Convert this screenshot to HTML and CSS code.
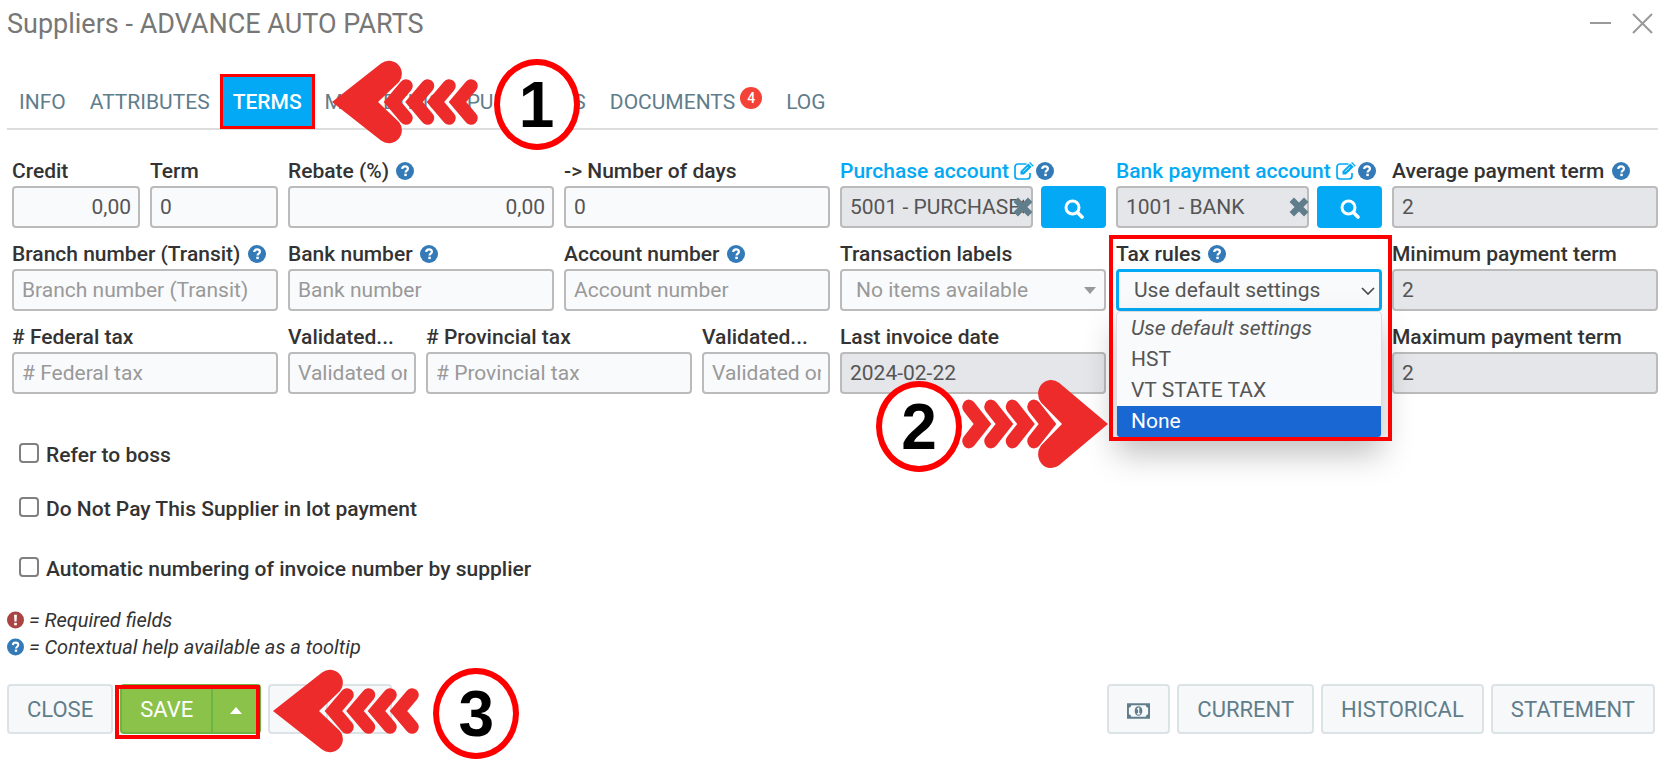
FILE: index.html
```
<!DOCTYPE html>
<html lang="en">
<head>
  <meta charset="UTF-8" />
  <meta name="viewport" content="width=device-width, initial-scale=1.0"/>
  <title>Suppliers - ADVANCE AUTO PARTS</title>
  <link rel="stylesheet" href="styles.css">
</head>
<body>
  <!-- shared icons -->
  <svg class="sprite" aria-hidden="true">
    <symbol id="help" viewBox="0 0 18 18">
      <circle cx="9" cy="9" r="9" fill="#337ab7"/>
      <path d="M6.2 7c.1-1.700 1.200-2.600 2.900-2.600s2.800 1 2.800 2.400c0 1.900-2.300 1.900-2.300 3.700" fill="none" stroke="#fff" stroke-width="2.200"/>
      <rect x="8.300" y="11.700" width="2.500" height="2.400" fill="#fff"/>
    </symbol>
    <symbol id="required" viewBox="0 0 18 18">
      <circle cx="9" cy="9" r="9" fill="#a94442"/>
      <path d="M7.500 3.500h3l-.4 7.200H7.900z" fill="#fff"/>
      <rect x="7.600" y="12" width="2.800" height="2.600" fill="#fff"/>
    </symbol>
    <symbol id="edit" viewBox="0 0 20 18">
      <path d="M12.500 2H4a3 3 0 0 0-3 3v9a3 3 0 0 0 3 3h9a3 3 0 0 0 3-3v-3" fill="none" stroke="currentColor" stroke-width="1.700"/>
      <path d="M6.500 9.200 14.300 1.400l3.400 3.400L9.900 12.600H6.500z" fill="currentColor"/>
      <path d="m15.100.7 1-.6 3.600 3.600-.9 1z" fill="currentColor"/>
      <path d="m9 9.800 5-5" stroke="#fff" stroke-width=".8"/>
    </symbol>
    <symbol id="search" viewBox="0 0 20 20">
      <circle cx="8.500" cy="8.500" r="6.500" fill="none" stroke="currentColor" stroke-width="3"/>
      <path d="m13.500 13.500 4.500 4.500" stroke="currentColor" stroke-width="3.600" stroke-linecap="round"/>
    </symbol>
    <symbol id="clear" viewBox="0 0 18 18">
      <path d="m2.500 2.500 13 13M15.500 2.500l-13 13" stroke="currentColor" stroke-width="5.600"/>
    </symbol>
    <symbol id="arrow" viewBox="0 0 146 84" preserveAspectRatio="none">
      <path d="M0 42 49 3.500A13 13 0 0 1 67 22L46 42l21 20a13 13 0 0 1-18 18.500z" fill="#ee2b2b"/>
      <path d="M74 26 60.500 42 74 58M95.500 26 82 42l13.500 16M117 26l-13.500 16L117 58M139 26l-13.500 16L139 58" fill="none" stroke="#ee2b2b" stroke-width="13.500" stroke-linecap="round"/>
    </symbol>
  </svg>

  <div class="window">
    <header class="titlebar">
      <h1>Suppliers - ADVANCE AUTO PARTS</h1>
      <div class="window-actions">
        <button type="button" aria-label="Minimize"><svg width="22" height="22"><path d="M0 10h21" stroke="#999" stroke-width="2"/></svg></button>
        <button type="button" aria-label="Close window"><svg width="22" height="22"><path d="m1 1 19 19M20 1 1 20" stroke="#999" stroke-width="2"/></svg></button>
      </div>
    </header>

    <nav class="tabs">
      <a href="#info">INFO</a>
      <a href="#attributes">ATTRIBUTES</a>
      <div class="step step-tab">
        <a href="#terms" class="active">TERMS</a>
        <div class="callout">
          <svg class="arrow"><use href="#arrow"/></svg>
          <span class="number">1</span>
        </div>
      </div>
      <a href="#marketing">MARKETING</a>
      <a href="#purchases">PURCHASES</a>
      <a href="#documents">DOCUMENTS<span class="badge">4</span></a>
      <a href="#log">LOG</a>
    </nav>

    <form id="termsForm">
      <div class="fields">
        <div class="field small">
          <label for="credit">Credit</label>
          <input type="text" id="credit" class="amount" value="0,00" />
        </div>
        <div class="field small">
          <label for="term">Term</label>
          <input type="text" id="term" value="0" />
        </div>
        <div class="field">
          <label for="rebate">Rebate (%) <svg class="icon"><use href="#help"/></svg></label>
          <input type="text" id="rebate" class="amount" value="0,00" />
        </div>
        <div class="field">
          <label for="days">-&gt; Number of days</label>
          <input type="text" id="days" value="0" />
        </div>
        <div class="field">
          <label for="purchaseAccount" class="linked"><a href="#purchase-account">Purchase account <svg class="icon edit"><use href="#edit"/></svg></a><svg class="icon"><use href="#help"/></svg></label>
          <div class="lookup">
            <div class="lookup-value">
              <input type="text" id="purchaseAccount" value="5001 - PURCHASES" readonly />
              <button type="button" class="clear" aria-label="Clear"><svg><use href="#clear"/></svg></button>
            </div>
            <button type="button" class="search" aria-label="Search"><svg><use href="#search"/></svg></button>
          </div>
        </div>
        <div class="field">
          <label for="bankAccount" class="linked"><a href="#bank-account">Bank payment account <svg class="icon edit"><use href="#edit"/></svg></a><svg class="icon"><use href="#help"/></svg></label>
          <div class="lookup">
            <div class="lookup-value">
              <input type="text" id="bankAccount" value="1001 - BANK" readonly />
              <button type="button" class="clear" aria-label="Clear"><svg><use href="#clear"/></svg></button>
            </div>
            <button type="button" class="search" aria-label="Search"><svg><use href="#search"/></svg></button>
          </div>
        </div>
        <div class="field">
          <label for="averageTerm">Average payment term <svg class="icon"><use href="#help"/></svg></label>
          <input type="text" id="averageTerm" value="2" readonly />
        </div>

        <div class="field">
          <label for="branch">Branch number (Transit) <svg class="icon"><use href="#help"/></svg></label>
          <input type="text" id="branch" placeholder="Branch number (Transit)" />
        </div>
        <div class="field">
          <label for="bankNumber">Bank number <svg class="icon"><use href="#help"/></svg></label>
          <input type="text" id="bankNumber" placeholder="Bank number" />
        </div>
        <div class="field">
          <label for="accountNumber">Account number <svg class="icon"><use href="#help"/></svg></label>
          <input type="text" id="accountNumber" placeholder="Account number" />
        </div>
        <div class="field">
          <label for="labels">Transaction labels</label>
          <div class="select-wrap">
            <select id="labels" class="empty"><option>No items available</option></select>
            <svg class="caret" viewBox="0 0 12 7"><path d="M0 0h12L6 7z" fill="#999"/></svg>
          </div>
        </div>
        <div class="field step step-tax">
          <label for="taxRules">Tax rules <svg class="icon"><use href="#help"/></svg></label>
          <div class="select-wrap">
            <select id="taxRules" class="open"><option>Use default settings</option></select>
            <svg class="chevron" viewBox="0 0 14 8"><path d="m1 1 6 6 6-6" fill="none" stroke="#444" stroke-width="1.600"/></svg>
            <ul class="menu">
              <li class="default">Use default settings</li>
              <li>HST</li>
              <li>VT STATE TAX</li>
              <li class="selected">None</li>
            </ul>
          </div>
          <div class="callout">
            <span class="number">2</span>
            <svg class="arrow"><use href="#arrow"/></svg>
          </div>
        </div>
        <div class="field">
          <label for="minimumTerm">Minimum payment term</label>
          <input type="text" id="minimumTerm" value="2" readonly />
        </div>

        <div class="field">
          <label for="federalTax"># Federal tax</label>
          <input type="text" id="federalTax" placeholder="# Federal tax" />
        </div>
        <div class="field small">
          <label for="federalValidated">Validated...</label>
          <input type="text" id="federalValidated" placeholder="Validated on" />
        </div>
        <div class="field">
          <label for="provincialTax"># Provincial tax</label>
          <input type="text" id="provincialTax" placeholder="# Provincial tax" />
        </div>
        <div class="field small">
          <label for="provincialValidated">Validated...</label>
          <input type="text" id="provincialValidated" placeholder="Validated on" />
        </div>
        <div class="field">
          <label for="lastInvoice">Last invoice date</label>
          <input type="text" id="lastInvoice" value="2024-02-22" readonly />
        </div>
        <div class="field last">
          <label for="maximumTerm">Maximum payment term</label>
          <input type="text" id="maximumTerm" value="2" readonly />
        </div>
      </div>

      <div class="checks">
        <label><input type="checkbox" /><span>Refer to boss</span></label>
        <label><input type="checkbox" /><span>Do Not Pay This Supplier in lot payment</span></label>
        <label><input type="checkbox" /><span>Automatic numbering of invoice number by supplier</span></label>
      </div>

      <div class="legend">
        <p><svg class="icon"><use href="#required"/></svg> = Required fields</p>
        <p><svg class="icon"><use href="#help"/></svg> = Contextual help available as a tooltip</p>
      </div>

      <footer class="actions">
        <button type="button" class="btn">CLOSE</button>
        <div class="step step-save">
          <div class="split save">
            <button type="submit" class="btn">SAVE</button>
            <button type="button" class="btn toggle" aria-label="More save options"><svg viewBox="0 0 12 7"><path d="M0 7h12L6 0z" fill="currentColor"/></svg></button>
          </div>
          <div class="callout">
            <svg class="arrow"><use href="#arrow"/></svg>
            <span class="number">3</span>
          </div>
        </div>
        <div class="split print">
          <button type="button" class="btn" aria-label="Print"></button>
          <button type="button" class="btn toggle" aria-label="More print options"><svg viewBox="0 0 12 7"><path d="M0 7h12L6 0z" fill="currentColor"/></svg></button>
        </div>
        <div class="reports">
          <button type="button" class="btn money" aria-label="Payments">
            <svg viewBox="0 0 24 16"><path fill-rule="evenodd" d="M0 0h24v16H0zM4.500 2A3 3 0 0 1 2 4.500v7A3 3 0 0 1 4.500 14h15a3 3 0 0 1 2.500-2.500v-7A3 3 0 0 1 19.500 2z" fill="currentColor"/><ellipse cx="12" cy="8" rx="4" ry="5" fill="currentColor"/><path d="m10.500 6.200 1.700-1.200v5.600M10.300 11h3.600" fill="none" stroke="#fff" stroke-width="1.200"/></svg>
          </button>
          <button type="button" class="btn">CURRENT</button>
          <button type="button" class="btn">HISTORICAL</button>
          <button type="button" class="btn">STATEMENT</button>
        </div>
      </footer>
    </form>
  </div>
</body>
</html>
```

FILE: styles.css
```
:root {
  --text: #333;
  --value: #555;
  --muted: #999;
  --slate: #607d8b;
  --primary: #03a9f4;
  --border: #bbb;
  --field-bg: #f9fafc;
  --readonly-bg: #e5e6ea;
  --mark: #f00;
}

* {
  box-sizing: border-box;
}

body {
  margin: 0;
  font-family: Roboto, sans-serif;
  font-size: 20px;
  color: var(--text);
  background: #fff;
}

button, input, select {
  font: inherit;
}

button {
  cursor: pointer;
}

.sprite {
  position: absolute;
  width: 0;
  height: 0;
}

.window {
  padding: 0 3px 0 7px;
  overflow: hidden;
}

/* title bar */
.titlebar {
  display: flex;
  justify-content: space-between;
  align-items: center;
  height: 48px;
  padding-right: 4px;
}

h1 {
  margin: 0;
  font-size: 27px;
  font-weight: 400;
  color: #777;
}

.window-actions {
  display: flex;
  gap: 20px;
}

.window-actions button {
  padding: 0;
  border: none;
  background: none;
}

.window-actions svg {
  display: block;
}

/* tabs */
.tabs {
  display: flex;
  align-items: stretch;
  height: 82px;
  padding-top: 27px;
  border-bottom: 2px solid #ddd;
  font-size: 21px;
}

.tabs a {
  display: flex;
  align-items: center;
  height: 53px;
  padding: 0 12px;
  color: var(--slate);
  text-decoration: none;
}

.tabs a.active {
  padding: 0 11px;
  background: var(--primary);
  color: #fff;
  font-weight: 500;
}

.badge {
  width: 22px;
  height: 22px;
  margin: 0 0 8px 5px;
  border-radius: 50%;
  background: #f44336;
  color: #fff;
  font-size: 14px;
  font-weight: 500;
  line-height: 22px;
  text-align: center;
}

/* fields */
.fields {
  display: grid;
  grid-template-columns: repeat(12, minmax(0, 1fr));
  gap: 11px 10px;
  padding: 26px 0 0 5px;
}

.field {
  grid-column: span 2;
  min-width: 0;
}

.field.small {
  grid-column: span 1;
}

.field.last {
  grid-column: 11 / span 2;
}

.field > label {
  display: block;
  height: 30px;
  line-height: 30px;
  font-size: 21px;
  font-weight: 500;
  overflow: hidden;
  text-overflow: ellipsis;
  white-space: nowrap;
}

.field a {
  color: var(--primary);
  text-decoration: none;
}

.icon {
  width: 18px;
  height: 18px;
  margin-left: 2px;
  vertical-align: -2px;
}

.icon.edit {
  width: 20px;
  margin-left: 0;
}

.field input, .field select {
  display: block;
  width: 100%;
  height: 42px;
  padding: 0 7px 0 8px;
  border: 2px solid var(--border);
  border-radius: 4px;
  background: var(--field-bg);
  color: var(--value);
  font-size: 21px;
  outline: none;
}

.field input[readonly] {
  background: var(--readonly-bg);
}

.field input::placeholder {
  color: var(--muted);
  opacity: 1;
}

.field .amount {
  text-align: right;
}

.lookup {
  display: flex;
  gap: 8px;
}

.lookup-value {
  position: relative;
  flex: 1;
  min-width: 0;
}

.clear {
  position: absolute;
  top: 11px;
  right: 0;
  padding: 0;
  border: none;
  background: none;
  color: var(--slate);
}

.clear svg {
  display: block;
  width: 20px;
  height: 20px;
}

.search {
  width: 65px;
  height: 42px;
  padding: 0;
  border: none;
  border-radius: 4px;
  background: var(--primary);
  color: #fff;
}

.search svg {
  width: 20px;
  height: 20px;
  vertical-align: middle;
}

.select-wrap {
  position: relative;
}

.field select {
  appearance: none;
  padding: 0 14px;
}

.field select.empty {
  color: var(--muted);
}

.field select.open {
  padding: 0 15px;
  border: 3px solid var(--primary);
}

.caret, .chevron {
  position: absolute;
  top: 18px;
  right: 10px;
  width: 12px;
  height: 7px;
}

.chevron {
  right: 7px;
  width: 14px;
  height: 8px;
}

.menu {
  position: absolute;
  z-index: 1;
  top: 100%;
  left: 0;
  right: 0;
  margin: 0;
  padding: 1px 0 0;
  border: 1px solid #ddd;
  border-radius: 4px;
  background: var(--field-bg);
  box-shadow: 0 16px 32px rgba(0, 0, 0, 0.25);
  color: var(--value);
  font-size: 21px;
  line-height: 31px;
  list-style: none;
  overflow: hidden;
}

.menu li {
  padding: 0 14px;
}

.menu .default {
  font-style: italic;
}

.menu .selected {
  background: #1967d2;
  color: #fff;
}

/* check boxes */
.checks {
  display: flex;
  flex-direction: column;
  gap: 28px;
  padding: 48px 0 0 12px;
}

.checks label {
  display: flex;
  align-items: center;
  gap: 7px;
  height: 26px;
  font-size: 21px;
  font-weight: 500;
}

.checks label:last-child {
  margin-top: 6px;
}

.checks input {
  appearance: none;
  width: 20px;
  height: 20px;
  margin: 0 0 4px;
  border: 2px solid #808080;
  border-radius: 4px;
  background: #fff;
}

.legend {
  padding-top: 25px;
}

.legend p {
  margin: 0;
  font-style: italic;
  line-height: 27px;
}

.legend .icon {
  width: 17px;
  margin: 0;
}

/* bottom buttons */
.actions {
  display: flex;
  gap: 7px;
  padding: 23px 3px 31px 0;
}

.btn {
  height: 50px;
  padding: 0 18px;
  border: 2px solid #dce3e6;
  border-radius: 4px;
  background: #f7f8fa;
  color: var(--slate);
  font-size: 22px;
}

.split {
  display: flex;
}

.split .btn:first-child {
  border-right: none;
  border-radius: 4px 0 0 4px;
}

.split .toggle {
  width: 50px;
  padding: 0;
  border-radius: 0 4px 4px 0;
}

.btn svg {
  width: 12px;
  height: 7px;
  vertical-align: middle;
}

.save .btn {
  border-color: #6cb444;
  background: #8bc34a;
  color: #fff;
}

.print .btn {
  width: 58px;
}

.print .toggle {
  width: 66px;
}

.reports {
  display: flex;
  gap: 7px;
  margin-left: auto;
}

.btn.money svg {
  width: 23px;
  height: 16px;
}

/* numbered steps */
.step {
  position: relative;
}

.step::after {
  content: "";
  position: absolute;
  z-index: 2;
  inset: -1px -2px;
  border: 3px solid var(--mark);
  pointer-events: none;
}

.step-tax::after {
  inset: -4px -10px -130px -7px;
  border-width: 4px;
}

.step-save::after {
  inset: 1px 1px -5px -5px;
  border-width: 4px;
}

.callout {
  position: absolute;
  z-index: 3;
  top: -22px;
  left: 100%;
  display: flex;
  align-items: center;
  gap: 16px;
  margin-left: 19px;
}

.step-tax .callout {
  top: 136px;
  right: 100%;
  left: auto;
  gap: 0;
  margin: 0 8px 0 0;
}

.step-save .callout {
  gap: 14px;
  margin-left: 12px;
}

.arrow {
  flex: none;
  width: 146px;
  height: 84px;
}

.step-tax .arrow {
  height: 90px;
  transform: scaleX(-1);
}

.number {
  flex: none;
  width: 86px;
  height: 91px;
  margin-top: 6px;
  border: 6px solid var(--mark);
  border-radius: 50%;
  background: #fff;
  color: #000;
  font-family: "Liberation Sans", sans-serif;
  font-size: 64px;
  font-weight: 700;
  line-height: 80px;
  text-align: center;
}
```
